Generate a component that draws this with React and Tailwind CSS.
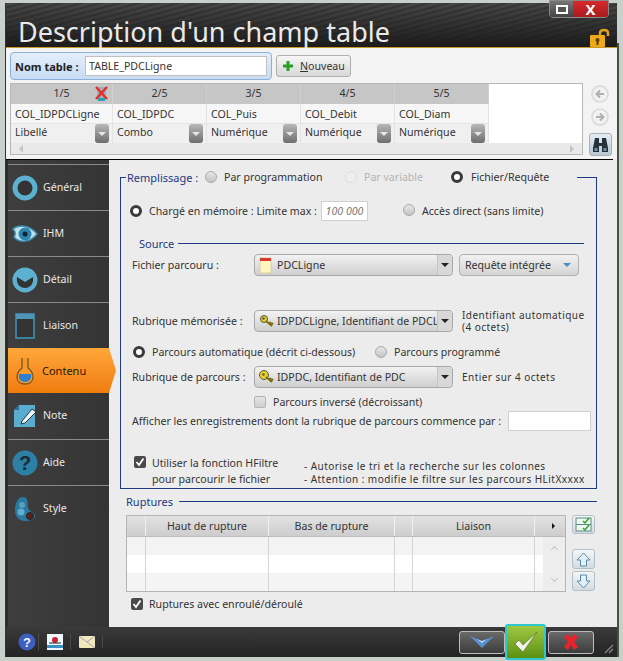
import React from "react";

const Radio = ({ on, off }) => (
  <span className={`inline-block shrink-0 w-[12px] h-[12px] rounded-full ${on ? "border-[3px] border-[#3a3a3a] bg-white" : off ? "border border-[#ddd] bg-[#efefef]" : "border border-[#a8a8a8] bg-gradient-to-b from-[#e8e8e8] to-[#c4c4c4]"}`} />
);

const Check = ({ on }) => (
  <span className={`inline-flex shrink-0 items-center justify-center w-[12px] h-[12px] rounded-[2px] ${on ? "bg-[#4a4a4a]" : "border border-[#b4b4b4] bg-gradient-to-b from-[#e4e4e4] to-[#cfcfcf]"}`}>
    {on && (
      <svg width="10" height="10" viewBox="0 0 10 10"><path d="M1.5 5 L4 8 L8.5 1.5" fill="none" stroke="#fff" strokeWidth="1.8" /></svg>
    )}
  </span>
);

const Key = ({ round }) => (
  <svg width="16" height="14" viewBox="0 0 16 14" className="shrink-0">
    <circle cx="5" cy="5" r={round ? 4.5 : 3.5} fill="#e6d020" stroke="#555" />
    <circle cx="4.5" cy="4.5" r="1.2" fill="#555" />
    <path d="M7 7 L13 12 M10 10 L12 8 M12 11 L14 9" stroke="#7a6c10" strokeWidth="2" fill="none" />
  </svg>
);

const Sheet = () => (
  <svg width="13" height="17" viewBox="0 0 13 17" className="shrink-0">
    <rect x="1" y="1" width="11" height="15" fill="#fff6c0" stroke="#d8d0a8" />
    <rect x="1" y="1" width="11" height="3" fill="#d83a30" />
  </svg>
);

const Select = ({ icon, text, w = "w-[199px]" }) => (
  <div className={`flex h-[22px] ${w} shrink-0 items-center rounded-[4px] border border-[#a8a8a8] bg-gradient-to-b from-[#f2f2f2] to-[#cfcfcf]`}>
    <div className="flex flex-1 min-w-0 items-center pl-[4px] overflow-hidden">
      <span className="flex w-[18px] shrink-0 justify-start">{icon}</span>
      <span>{text}</span>
    </div>
    <div className="flex h-full w-[15px] shrink-0 items-center justify-center border-l border-[#c4c4c4] bg-[#d8d8d8] rounded-r-[4px]">
      <span className="w-0 h-0 border-x-[4px] border-x-transparent border-t-[4px] border-t-[#222]" />
    </div>
  </div>
);

const Line = ({ className = "flex-1" }) => <div className={`h-px bg-[#1d3a82] ${className}`} />;

const DropBtn = () => (
  <span className="flex h-[19px] w-[14px] shrink-0 items-center justify-center rounded-[3px] bg-gradient-to-b from-[#b8b8b8] to-[#6e6e6e]">
    <span className="w-0 h-0 border-x-[4px] border-x-transparent border-t-[4px] border-t-[#e8e8e8]" />
  </span>
);

const columns = [
  ["1/5", "COL_IDPDCLigne", "Libellé", "w-[102px]"],
  ["2/5", "COL_IDPDC", "Combo", "w-[94px]"],
  ["3/5", "COL_Puis", "Numérique", "w-[94px]"],
  ["4/5", "COL_Debit", "Numérique", "w-[94px]"],
  ["5/5", "COL_Diam", "Numérique", "w-[94px]"],
];

const IconRing = () => (
  <svg width="26" height="26" viewBox="0 0 26 26"><circle cx="13" cy="13" r="10" fill="#333" stroke="#5cb0d0" strokeWidth="5" /></svg>
);
const IconEye = () => (
  <svg width="26" height="22" viewBox="0 0 26 22">
    <path d="M1 6 C7 1 18 2 25 11 C18 20 7 20 2 14 C4 11 3 8 1 6Z" fill="#bfe0ec" stroke="#3c8cb0" strokeWidth="1.5" />
    <circle cx="13" cy="11" r="6.5" fill="#2a86ac" />
    <circle cx="13" cy="11" r="2.5" fill="#123" />
  </svg>
);
const IconDetail = () => (
  <svg width="26" height="26" viewBox="0 0 26 26">
    <circle cx="13" cy="13" r="12.5" fill="#5cb0d0" />
    <path d="M5 10 L13 15 L21 10 C22 17 18 21 13 21 C8 21 4 17 5 10Z" fill="#333" />
  </svg>
);
const IconWindow = () => (
  <svg width="20" height="26" viewBox="0 0 20 26">
    <rect x="1" y="1" width="18" height="24" fill="#333" stroke="#3e7f9e" strokeWidth="2" />
    <rect x="1" y="1" width="18" height="5" fill="#4f96b6" />
  </svg>
);
const IconFlask = () => (
  <svg width="18" height="28" viewBox="0 0 18 28">
    <path d="M6 1 V11 C2 14 1 17 1 20 C1 25 5 27 9 27 C13 27 17 25 17 20 C17 17 16 14 12 11 V1" fill="#f59a2a" stroke="#77551f" strokeWidth="1.3" />
    <path d="M3 17 H15 C16 22 13 25 9 25 C5 25 2 22 3 17Z" fill="#2d7fd0" />
  </svg>
);
const IconNote = () => (
  <svg width="24" height="24" viewBox="0 0 24 24">
    <path d="M6 1 H22 V23 H1 V6Z" fill="#58add0" />
    <path d="M1 6 H6 V1Z" fill="#2d6f8a" />
    <path d="M9 17 L19 5 L23 8 L12 19 L8 20Z" fill="#e8f4f8" stroke="#333" strokeWidth="1" />
  </svg>
);
const IconHelp = () => (
  <svg width="26" height="26" viewBox="0 0 26 26">
    <circle cx="13" cy="13" r="12.5" fill="#2c80a6" />
    <text x="13" y="20" textAnchor="middle" fontSize="20" fontWeight="700" fontFamily="'Liberation Sans',sans-serif" fill="#1c2a34">?</text>
  </svg>
);
const IconPalette = () => (
  <svg width="22" height="26" viewBox="0 0 22 26">
    <path d="M9 1 C4 1 1 7 1 14 C1 21 5 25 11 25 C15 25 21 24 21 20 C21 16 15 16 14 12 C13 8 15 1 9 1Z" fill="#2a7aa0" />
    <circle cx="8" cy="9" r="3" fill="#5a9ec0" />
    <circle cx="7" cy="16" r="3.5" fill="#62add0" />
    <circle cx="16" cy="20" r="3.5" fill="#5a1f1f" stroke="#222" />
  </svg>
);

const nav = [
  ["Général", <IconRing />],
  ["IHM", <IconEye />],
  ["Détail", <IconDetail />],
  ["Liaison", <IconWindow />],
  ["Contenu", <IconFlask />],
  ["Note", <IconNote />],
  ["Aide", <IconHelp />],
  ["Style", <IconPalette />],
];

const SideBtn = ({ children, className = "" }) => (
  <div className={`flex w-[23px] items-center justify-center rounded-[3px] border border-[#b4c0c8] bg-gradient-to-b from-[#f4f6f7] to-[#d4dce0] ${className}`}>{children}</div>
);

const RoundArrow = ({ d }) => (
  <svg width="18" height="18" viewBox="0 0 18 18">
    <circle cx="9" cy="9" r="8" fill="#f2f2f2" stroke="#dadada" strokeWidth="1.6" />
    <path d={d} fill="none" stroke="#b0b0b0" strokeWidth="2" />
  </svg>
);

export default function App() {
  return (
    <div className="flex h-[661px] w-[623px] overflow-hidden whitespace-nowrap bg-[#c9cfcb] pl-[5px] pt-[3px] text-[10.6px] leading-none text-[#333] [font-family:'Noto_Sans','Liberation_Sans',sans-serif]">
      <div className="relative flex h-[654px] w-[612px] shrink-0 flex-col border-l border-[#333] bg-[#ececec]">
        {/* Title */}
        <div className="relative flex h-[45px] shrink-0 items-center border-b border-[#c89a2a] bg-[repeating-linear-gradient(165deg,#3d3d3d_0px,#4a4a4a_2px,#333_5px)] pl-[12px]">
          <div className="pointer-events-none absolute inset-0 bg-gradient-to-b from-transparent to-[#1b1b1b]" />
          <span className="relative mt-[12px] text-[27px] text-[#e9e9e9]">Description d'un champ table</span>
          <div className="absolute right-[8px] -top-[3px] flex h-[18px] w-[60px] overflow-hidden rounded-b-[4px] border border-[#888]">
            <div className="flex w-[23px] items-center justify-center bg-gradient-to-b from-[#777] to-[#444]">
              <span className="h-[9px] w-[12px] border-2 border-white bg-[#555]" />
            </div>
            <div className="flex flex-1 items-center justify-center bg-gradient-to-b from-[#d8282c] to-[#a81c20] text-[15px] font-bold text-white">X</div>
          </div>
          <svg className="absolute right-[6px] top-[24px]" width="22" height="21" viewBox="0 0 22 21">
            <path d="M11 9 V6 C11 2 19 2 19 6 V9" fill="none" stroke="#e0a020" strokeWidth="2.5" />
            <rect x="1" y="8" width="15" height="12" rx="1" fill="#eeaa16" />
            <circle cx="8.5" cy="13" r="2" fill="#5a3a10" />
            <rect x="7.5" y="13" width="2" height="5" fill="#5a3a10" />
          </svg>
        </div>

        {/* Toolbar */}
        <div className="flex h-[35px] shrink-0 items-start bg-[#f3f3f3] pl-[4px] pt-[4px]">
          <div className="flex h-[28px] w-[262px] items-center rounded-[4px] border border-[#8db0d8] bg-gradient-to-b from-[#e4eefa] to-[#c8dcf4] pl-[4px]">
            <span className="w-[70px] shrink-0 text-[11px] font-bold text-[#222]">Nom table :</span>
            <div className="flex h-[20px] w-[182px] items-center border border-[#c0c0c0] bg-white pl-[3px]">TABLE_PDCLigne</div>
          </div>
          <div className="ml-[4px] mt-[3px] flex h-[22px] w-[75px] items-center rounded-[3px] border border-[#b0b0b0] bg-gradient-to-b from-[#f6f6f6] to-[#d8d8d8] pl-[5px]">
            <svg width="12" height="12" viewBox="0 0 12 12"><path d="M6 1 V11 M1 6 H11" stroke="#28a028" strokeWidth="3" /></svg>
            <span className="ml-[6px]"><span className="underline">N</span>ouveau</span>
          </div>
        </div>

        {/* Columns */}
        <div className="flex h-[76px] shrink-0 bg-[#f3f3f3] pl-[4px]">
          <div className="flex h-[72px] w-[573px] flex-col border border-[#b8b8b8] bg-white">
            <div className="flex flex-1">
              {columns.map(([n, name, type, w], i) => (
                <div key={n} className={`flex ${w} flex-col`}>
                  <div className="relative flex h-[20px] items-center justify-center border-r border-[#d0d0d0] bg-[#c6c6c6] pb-[1px] text-[#333]">
                    {n}
                    {i === 0 && (
                      <svg className="absolute right-[3px] top-[1px]" width="15" height="17" viewBox="0 0 15 17">
                        <rect x="3" y="2" width="9" height="11" fill="#9ab0c0" />
                        <path d="M2 2 L13 14 M13 2 L2 14" stroke="#e03028" strokeWidth="2.5" />
                        <rect x="4" y="13" width="7" height="3" fill="#30a0b0" />
                      </svg>
                    )}
                  </div>
                  <div className="flex h-[20px] items-center border-r border-b border-[#e4e4e4] bg-[#f6f6f6] pl-[4px] pt-[2px]">{name}</div>
                  <div className="flex h-[19px] items-center justify-between border-r border-[#e4e4e4] bg-[#f0f0f0] pl-[4px] pr-[3px]">
                    <span className="-mt-[2px]">{type}</span>
                    <DropBtn />
                  </div>
                </div>
              ))}
            </div>
            <div className="flex h-[12px] items-center justify-between bg-[#e9e9e9] px-[8px] text-[#c4c4c4]">
              <span className="w-0 h-0 border-y-[4px] border-y-transparent border-r-[4px] border-r-[#c4c4c4]" />
              <span className="w-0 h-0 border-y-[4px] border-y-transparent border-l-[4px] border-l-[#c4c4c4]" />
            </div>
          </div>
          <div className="ml-[7px] flex w-[20px] flex-col items-center">
            <span className="mt-[2px] flex h-[18px] w-[18px] shrink-0 items-center justify-center">
              <RoundArrow d="M13 9 H6 M9 5.5 L5.5 9 L9 12.5" />
            </span>
            <span className="mt-[5px] flex h-[18px] w-[18px] shrink-0 items-center justify-center">
              <RoundArrow d="M5 9 H12 M9 5.5 L12.5 9 L9 12.5" />
            </span>
            <span className="mt-[7px] flex h-[23px] w-[23px] shrink-0 items-center justify-center rounded-[3px] border border-[#a8b0b8] bg-gradient-to-b from-[#e4ecf2] to-[#b8c8d4]">
              <svg width="17" height="17" viewBox="0 0 17 17">
                <path d="M3 2 H7 V7 H10 V2 H14 L16 12 V16 H10 V10 H7 V16 H1 V12Z" fill="#263038" />
                <rect x="2.5" y="12" width="3" height="3" fill="#6a90b0" />
                <rect x="11.5" y="12" width="3" height="3" fill="#6a90b0" />
              </svg>
            </span>
          </div>
        </div>

        <div className="h-px w-[607px] shrink-0 bg-black" />

        {/* Main */}
        <div className="flex min-h-0 flex-1">
          <div className="flex w-[103px] shrink-0 flex-col border-l-2 border-[#2c2c2c] bg-gradient-to-r from-[#3e3e3e] to-[#343434] pt-[4px]">
            {nav.map(([label, icon]) =>
              label === "Contenu" ? (
                <div key={label} className="z-10 flex h-[45px] w-[108px] shrink-0 items-center bg-gradient-to-b from-[#ffa73a] to-[#f07c0a] pl-[3px] text-[#2b1804] [clip-path:polygon(0_0,101px_0,108px_50%,101px_100%,0_100%)]">
                  <span className="flex w-[28px] justify-center">{icon}</span>
                  <span className="ml-[3px] text-[11px]">{label}</span>
                </div>
              ) : (
                <div key={label} className={`flex h-[46px] shrink-0 items-center text-[#e8e8e8] ${label === "Note" ? "" : "border-t border-[#8a8a8a]"}`}>
                  <span className="flex w-[34px] shrink-0 justify-center">{icon}</span>
                  <span className="ml-px -mt-[1px]">{label}</span>
                </div>
              )
            )}
          </div>

          <div className="flex min-w-0 flex-1 flex-col bg-[#ececec] pl-[11px] pt-[17px]">
            {/* Remplissage */}
            <div className="w-[477px] border-x border-b border-[#1d3a82] pb-[3px]">
              <div className="-mt-[9px] flex h-[18px] items-center">
                <Line className="w-[5px]" />
                <span className="ml-px w-[78px] text-[11px] text-[#1d3a82]">Remplissage :</span>
                <Radio />
                <span className="ml-[7px] w-[121px]">Par programmation</span>
                <Radio off />
                <span className="ml-[7px] w-[87px] text-[#b4b4b4]">Par variable</span>
                <Radio on />
                <span className="ml-[8px] w-[106px]">Fichier/Requête</span>
                <Line />
              </div>
              <div className="mt-[15px] flex h-[20px] items-center pl-[9px]">
                <Radio on />
                <span className="ml-[7px] w-[172px]">Chargé en mémoire : Limite max :</span>
                <div className="flex h-[20px] w-[47px] items-center justify-center border border-[#d0d0d0] bg-white italic text-[#777]">100 000</div>
                <span className="ml-[35px]"><Radio /></span>
                <span className="ml-[7px]">Accès direct (sans limite)</span>
              </div>
              <div className="mt-[14px] flex h-[16px] items-center pl-[18px] pr-[12px]">
                <span className="mr-[4px] text-[11px] text-[#1d3a82]">Source</span>
                <Line />
              </div>
              <div className="mt-[3px] flex h-[22px] items-center pl-[11px]">
                <span className="w-[122px] shrink-0">Fichier parcouru :</span>
                <Select icon={<Sheet />} text="PDCLigne" />
                <div className="ml-[6px] flex h-[22px] w-[120px] items-center rounded-[4px] border border-[#b0b0b0] bg-gradient-to-b from-[#f2f2f2] to-[#d4d4d4] pl-[5px]">
                  Requête intégrée
                  <span className="ml-[12px] w-0 h-0 border-x-[4px] border-x-transparent border-t-[4px] border-t-[#4a90c8]" />
                </div>
              </div>
              <div className="mt-[34px] flex h-[22px] items-center pl-[11px]">
                <span className="w-[122px] shrink-0">Rubrique mémorisée :</span>
                <Select icon={<Key />} text="IDPDCLigne, Identifiant de PDCLigne" />
                <span className="ml-[9px] text-[10px] leading-[12px] tracking-[0.45px]">Identifiant automatique<br />(4 octets)</span>
              </div>
              <div className="mt-[13px] flex h-[14px] items-center pl-[12px]">
                <Radio on />
                <span className="ml-[7px] w-[223px]">Parcours automatique (décrit ci-dessous)</span>
                <Radio />
                <span className="ml-[7px]">Parcours programmé</span>
              </div>
              <div className="mt-[7px] flex h-[22px] items-center pl-[11px]">
                <span className="w-[122px] shrink-0">Rubrique de parcours :</span>
                <Select icon={<Key round />} text="IDPDC, Identifiant de PDC" />
                <span className="ml-[9px] text-[10px] tracking-[0.45px]">Entier sur 4 octets</span>
              </div>
              <div className="mt-[7px] flex h-[14px] items-center pl-[133px]">
                <Check />
                <span className="ml-[7px]">Parcours inversé (décroissant)</span>
              </div>
              <div className="mt-[2px] flex h-[20px] items-center pl-[11px]">
                <span className="w-[376px] shrink-0">Afficher les enregistrements dont la rubrique de parcours commence par :</span>
                <div className="h-[20px] w-[83px] border border-[#d0d0d0] bg-white" />
              </div>
              <div className="mt-[24px] flex h-[30px] pl-[13px]">
                <span className="mt-[1px]"><Check on /></span>
                <span className="ml-[6px] w-[152px] leading-[16px]">Utiliser la fonction HFiltre<br />pour parcourir le fichier</span>
                <span className="mt-[5px] text-[10px] leading-[13px] tracking-[0.45px]">- Autorise le tri et la recherche sur les colonnes<br />- Attention : modifie le filtre sur les parcours HLitXxxxx</span>
              </div>
            </div>

            {/* Ruptures */}
            <div className="mt-[4px] flex h-[16px] w-[477px] items-center pl-[6px]">
              <span className="mr-[6px] text-[11px] text-[#1d3a82]">Ruptures</span>
              <Line />
            </div>
            <div className="mt-[6px] flex pl-[6px]">
              <div className="flex h-[77px] w-[440px] flex-col border border-[#b4b4b4] bg-white">
                <div className="grid h-[21px] grid-cols-[19px_123px_126px_18px_122px_1fr] border-b border-[#bcbcbc] bg-gradient-to-b from-[#e2e2e2] to-[#cdcdcd] text-[#333]">
                  <div className="border-r border-[#f0f0f0]" />
                  <div className="flex items-center justify-center border-r border-[#f0f0f0]">Haut de rupture</div>
                  <div className="flex items-center justify-center border-r border-[#f0f0f0]">Bas de rupture</div>
                  <div className="border-r border-[#f0f0f0]" />
                  <div className="flex items-center justify-center border-r border-[#f0f0f0]">Liaison</div>
                  <div className="flex items-center justify-end pr-[10px]">
                    <span className="w-0 h-0 border-y-[3px] border-y-transparent border-l-[3px] border-l-[#111]" />
                  </div>
                </div>
                <div className="flex flex-1">
                  <div className="flex-1">
                    {["bg-[#f3f3f3]", "bg-white", "bg-[#f4f4f4]"].map((bg) => (
                      <div key={bg} className={`grid h-[18px] grid-cols-[19px_123px_126px_18px_122px_1fr] ${bg}`}>
                        <div className="border-r border-[#d4d4d4]" />
                        <div className="border-r border-[#d4d4d4]" />
                        <div className="border-r border-[#d4d4d4]" />
                        <div className="border-r border-[#d4d4d4]" />
                        <div className="border-r border-[#d4d4d4]" />
                        <div />
                      </div>
                    ))}
                  </div>
                  <div className="flex w-[22px] flex-col items-center justify-between bg-[#ededed] py-[8px]">
                    <span className="h-[5px] w-[5px] translate-y-[2px] rotate-45 border-l border-t border-[#c4c4c4]" />
                    <span className="h-[5px] w-[5px] -translate-y-[2px] rotate-45 border-b border-r border-[#c4c4c4]" />
                  </div>
                </div>
              </div>
              <div className="ml-[6px] flex w-[23px] flex-col">
                <SideBtn className="h-[19px]">
                  <svg width="17" height="15" viewBox="0 0 17 15">
                    <rect x="1" y="1" width="15" height="13" fill="#eef6ee" stroke="#5a8a8a" />
                    <path d="M1 7.5 H16" stroke="#5a8a8a" />
                    <path d="M8 4 L10 6 L14 1 M8 11 L10 13 L14 8" stroke="#30a030" strokeWidth="1.5" fill="none" />
                  </svg>
                </SideBtn>
                <SideBtn className="mt-[15px] h-[20px]">
                  <svg width="15" height="15" viewBox="0 0 15 15"><path d="M7.5 1 L14 8 H10.5 V14 H4.5 V8 H1Z" fill="#e4f0f8" stroke="#5a8aa8" /></svg>
                </SideBtn>
                <SideBtn className="mt-[2px] h-[20px]">
                  <svg width="15" height="15" viewBox="0 0 15 15"><path d="M7.5 14 L14 7 H10.5 V1 H4.5 V7 H1Z" fill="#e4f0f8" stroke="#5a8aa8" /></svg>
                </SideBtn>
              </div>
            </div>
            <div className="mt-[5px] flex h-[14px] items-center pl-[11px]">
              <Check on />
              <span className="ml-[6px]">Ruptures avec enroulé/déroulé</span>
            </div>
          </div>
        </div>

        {/* Bottom bar */}
        <div className="relative flex h-[30px] shrink-0 items-center bg-gradient-to-b from-[#3a3a3a] to-[#242424]">
          <div className="flex w-[97px] items-center">
            <span className="flex w-[33px] justify-center border-r border-[#4a4a4a] pl-[10px] pr-[1px]">
              <svg width="18" height="18" viewBox="0 0 18 18">
                <circle cx="9" cy="9" r="8.5" fill="#3f5fc0" />
                <text x="9" y="14" textAnchor="middle" fontSize="13" fontWeight="700" fontFamily="'Liberation Sans',sans-serif" fill="#f4f6ff">?</text>
              </svg>
            </span>
            <span className="flex w-[32px] justify-center border-r border-[#4a4a4a]">
              <svg width="16" height="16" viewBox="0 0 16 16">
                <rect width="16" height="16" fill="#f0f8ff" />
                <rect y="11" width="16" height="3" fill="#3a90c0" />
                <circle cx="8" cy="6" r="3" fill="#d02030" />
                <path d="M2 9 H14" stroke="#223" />
              </svg>
            </span>
            <span className="flex w-[32px] justify-center border-r border-[#4a4a4a]">
              <svg width="16" height="12" viewBox="0 0 16 12">
                <rect width="16" height="12" rx="1" fill="#efe8b8" />
                <path d="M0 0 L16 12 M16 0 L8 6" stroke="#a8a0c8" />
              </svg>
            </span>
          </div>
          <div className="ml-auto flex items-center pr-[23px]">
            <span className="flex h-[23px] w-[46px] items-center justify-center rounded-[3px] border border-[#bcbcbc] bg-gradient-to-b from-[#6a6a6a] to-[#3c3c3c]">
              <svg width="26" height="14" viewBox="0 0 26 14">
                <path d="M1 1 L13 6 L25 1 L13 13Z" fill="#5a90d0" />
                <path d="M8 4 L13 8 L18 4 L13 6Z" fill="#bcd6f0" />
              </svg>
            </span>
            <span className="z-10 mr-[2px] -my-[4px] flex h-[36px] w-[41px] items-center justify-center rounded-[3px] border-2 border-[#30c8d0] bg-gradient-to-b from-[#a0c840] to-[#5c9010]">
              <svg width="26" height="26" viewBox="0 0 26 26"><path d="M2 15 L10 23 L24 3 L10 16 L6 11Z" fill="#f0f4e8" stroke="#506820" strokeWidth="0.6" /></svg>
            </span>
            <span className="flex h-[23px] w-[46px] items-center justify-center rounded-[3px] border border-[#bcbcbc] bg-gradient-to-b from-[#6a6a6a] to-[#3c3c3c]">
              <svg width="18" height="18" viewBox="0 0 18 18"><path d="M2 4 L6 1 L9 5 L12 1 L16 4 L12 9 L16 14 L12 17 L9 12 L6 17 L2 14 L6 9Z" fill="#e8232c" /></svg>
            </span>
          </div>
          <svg className="absolute bottom-[3px] right-[3px]" width="10" height="10" viewBox="0 0 10 10"><path d="M1 9 L9 1 M5 9 L9 5" stroke="#8a8a8a" strokeWidth="1.2" /></svg>
        </div>
      </div>
      <div className="mt-[40px] h-[614px] w-[2px] shrink-0 bg-[#44543f]" />
    </div>
  );
}
